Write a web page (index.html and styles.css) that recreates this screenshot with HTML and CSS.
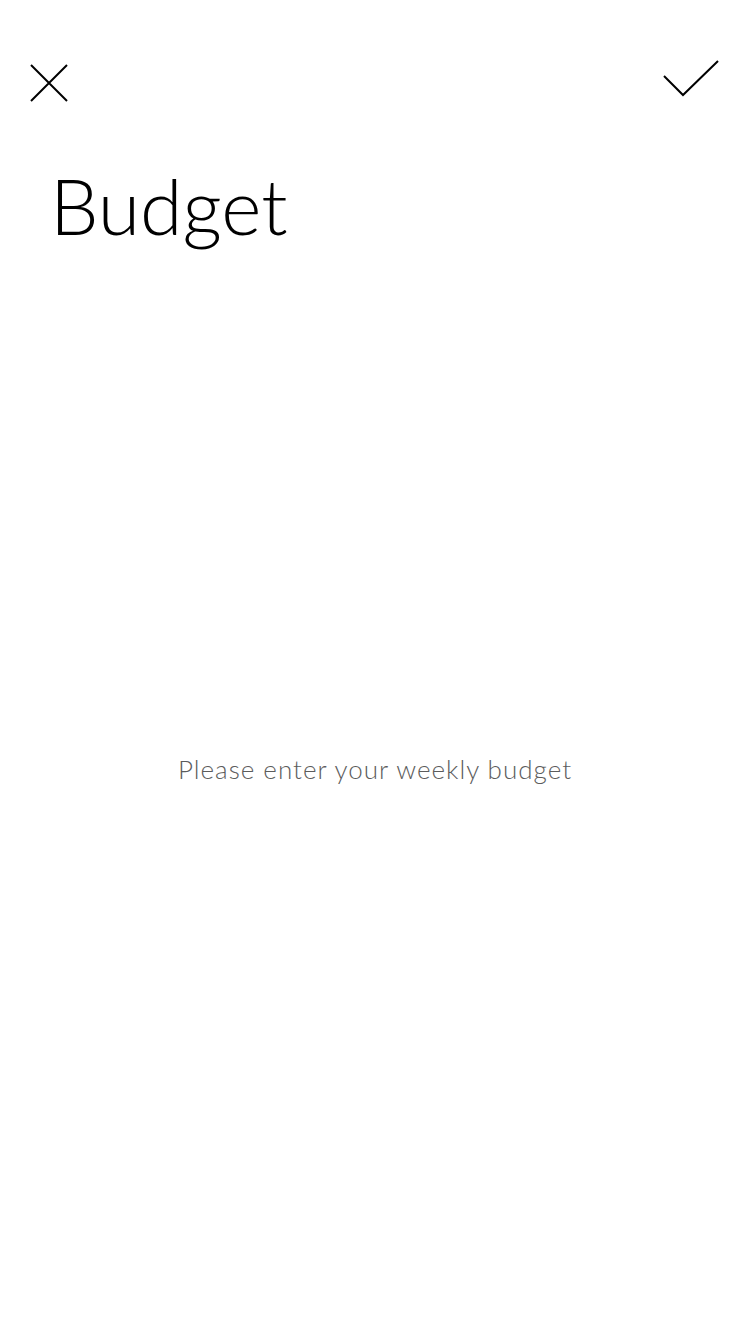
FILE: index.html
```html
<!DOCTYPE html>
<html lang="en">
<head>
<meta charset="utf-8">
<title>Budget</title>
<link rel="stylesheet" href="styles.css">
</head>
<body>
<div class="page">
  <header class="toolbar">
    <button class="icon-btn close" aria-label="Close">
      <svg width="38" height="38" viewBox="0 0 38 38"><path d="M1 1 L37 37 M37 1 L1 37" stroke="#000" stroke-width="2" fill="none"/></svg>
    </button>
    <button class="icon-btn confirm" aria-label="Confirm">
      <svg width="56" height="38" viewBox="0 0 56 38"><path d="M1 16 L20 35 L55 1" stroke="#000" stroke-width="2" fill="none"/></svg>
    </button>
  </header>
  <h1 class="title">Budget</h1>
  <main class="content">
    <p class="hint">Please enter your weekly budget</p>
  </main>
</div>
</body>
</html>
```
FILE: styles.css
```css
html, body {
  margin: 0;
  padding: 0;
  background: #fff;
}
.page {
  width: 750px;
  height: 1334px;
  display: flex;
  flex-direction: column;
  font-family: Lato, "Noto Sans", sans-serif;
}
.toolbar {
  display: flex;
  justify-content: space-between;
  align-items: flex-start;
  padding: 60px 31px 0 30px;
}
.icon-btn {
  border: 0;
  background: none;
  padding: 0;
  margin: 0;
  display: block;
}
.icon-btn svg { display: block; }
.close { margin-top: 4px; }
.title {
  margin: 58px 0 0 50px;
  font-weight: 300;
  font-size: 77px;
  line-height: 90px;
  color: #000;
  letter-spacing: 0;
}
.content {
  display: flex;
  justify-content: center;
  padding-top: 503px;
}
.hint {
  margin: 0;
  font-size: 26px;
  line-height: 32px;
  font-weight: 300;
  color: #5c5c5c;
  letter-spacing: 1px;
}
```
